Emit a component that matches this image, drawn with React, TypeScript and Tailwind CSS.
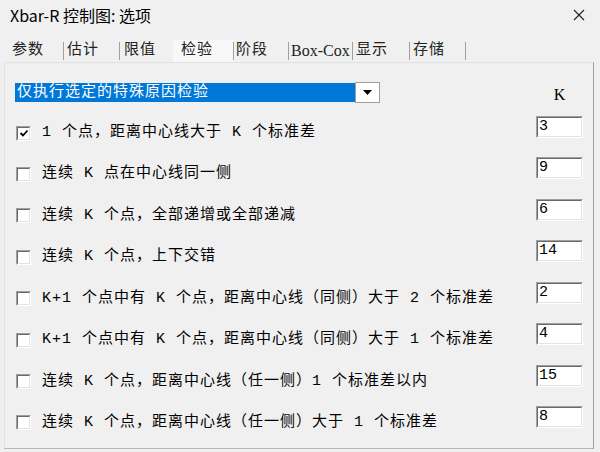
import React from 'react';

const rowFont = { fontFamily: '"Liberation Mono", "Noto Sans CJK SC", monospace' };

interface Tab {
  label: string;
  width: string;
  pad: string;
  sep: boolean;
  active?: boolean;
}

const tabs: Tab[] = [
  { label: '参数', width: 'w-[59px]', pad: 'pl-[7px]', sep: true },
  { label: '估计', width: 'w-[56px]', pad: 'pl-[3px]', sep: true },
  { label: '限值', width: 'w-[53px]', pad: 'pl-[4px]', sep: false },
  { label: '检验', width: 'w-[61px]', pad: 'pl-[8px]', sep: true, active: true },
  { label: '阶段', width: 'w-[55px]', pad: 'pl-[2px]', sep: true },
  { label: 'Box-Cox', width: 'w-[64px]', pad: 'pl-[2px]', sep: true },
  { label: '显示', width: 'w-[57px]', pad: 'pl-[3px]', sep: true },
  { label: '存储', width: 'w-[56px]', pad: 'pl-[3px]', sep: true },
];

const tests = [
  { text: '1 个点，距离中心线大于 K 个标准差', k: '3', checked: true },
  { text: '连续 K 点在中心线同一侧', k: '9' },
  { text: '连续 K 个点，全部递增或全部递减', k: '6' },
  { text: '连续 K 个点，上下交错', k: '14' },
  { text: 'K+1 个点中有 K 个点，距离中心线（同侧）大于 2 个标准差', k: '2' },
  { text: 'K+1 个点中有 K 个点，距离中心线（同侧）大于 1 个标准差', k: '4' },
  { text: '连续 K 个点，距离中心线（任一侧）1 个标准差以内', k: '15' },
  { text: '连续 K 个点，距离中心线（任一侧）大于 1 个标准差', k: '8' },
];

const Checkbox: React.FC<{ checked?: boolean }> = ({ checked }) => (
  <div className="w-[15px] h-[15px] border-t border-l border-[#a0a0a0] border-b-white border-r-white border-b border-r">
    <div className="w-full h-full bg-white border-t border-l border-[#696969] border-b border-r border-b-[#e3e3e3] border-r-[#e3e3e3] flex items-center justify-center">
      {checked && (
        <svg width="10" height="10" viewBox="0 0 10 10">
          <path d="M1.5 5 L4 7.5 L8.5 2.5" stroke="#000" strokeWidth="1.8" fill="none" />
        </svg>
      )}
    </div>
  </div>
);

const KInput: React.FC<{ value: string }> = ({ value }) => (
  <div className="w-[47px] h-[22px] border-t border-l border-[#a0a0a0] border-b border-r border-b-white border-r-white">
    <div className="w-full h-full bg-white border-t border-l border-[#696969] border-b border-r border-b-[#e3e3e3] border-r-[#e3e3e3] pl-[1px] text-[15px] leading-[18px] text-black" style={rowFont}>
      {value}
    </div>
  </div>
);

export default function App() {
  return (
    <div className="w-[600px] h-[452px] bg-[#f0f0f0] overflow-hidden text-black">
      {/* title bar */}
      <div className="h-[29px] flex items-center justify-between pl-[10px] pr-[15px]">
        <span className="text-[16px] leading-[20px]" style={{ fontFamily: '"Noto Sans CJK SC", "Noto Sans", sans-serif' }}>
          Xbar-R 控制图: 选项
        </span>
        <svg width="12" height="12" viewBox="0 0 12 12">
          <path d="M1 1 L11 11 M11 1 L1 11" stroke="#222" strokeWidth="1.1" fill="none" />
        </svg>
      </div>

      {/* tabs */}
      <div className="mt-[11px] h-[22px] flex pl-[5px]">
        {tabs.map((t) => (
          <div
            key={t.label}
            className={`${t.width} h-full flex items-center justify-between ${t.active ? 'bg-[#f8f8f8]' : ''}`}
          >
            <span
              className={`${t.pad} text-[#222] leading-[18px] ${t.label === 'Box-Cox' ? 'text-[16px]' : 'text-[15px] tracking-[1px]'}`}
              style={t.label === 'Box-Cox' ? { fontFamily: '"Liberation Serif", serif' } : rowFont}
            >
              {t.label}
            </span>
            {t.sep && <span className="w-px h-[18px] bg-[#a0a0a0]" />}
          </div>
        ))}
      </div>

      {/* panel */}
      <div className="ml-[4px] w-[590px] h-[387px] border-l border-t border-[#e2e2e2] border-r border-b border-r-[#a0a0a0] border-b-[#b4b4b4] pl-[10px] pr-[10px] pt-[19px]">
        <div className="flex justify-between items-start">
          <div className="flex items-start">
            <div className="w-[340px] h-[19px] mt-[1px] bg-[#0078d7] text-white text-[15px] leading-[19px] tracking-[1px] pl-[2px]" style={rowFont}>
              仅执行选定的特殊原因检验
            </div>
            <div className="w-[25px] h-[21px] bg-white border border-[#a0a0a0] flex items-center justify-center">
              <svg width="9" height="5" viewBox="0 0 9 5">
                <path d="M0 0 L9 0 L4.5 5 Z" fill="#000" />
              </svg>
            </div>
          </div>
          <div className="w-[47px] mt-[3px] text-center text-[16px] leading-[20px]" style={{ fontFamily: '"Liberation Serif", serif' }}>
            K
          </div>
        </div>

        <div className="mt-[11px]">
          {tests.map((t) => (
            <div key={t.text} className="h-[41.43px] flex justify-between items-start">
              <div className="flex items-center h-[20px] mt-[7px] pl-[1px]">
                <Checkbox checked={t.checked} />
                <span className="ml-[11px] text-[15px] leading-[20px] tracking-[1px] whitespace-pre" style={rowFont}>
                  {t.text}
                </span>
              </div>
              <KInput value={t.k} />
            </div>
          ))}
        </div>
      </div>
    </div>
  );
}
